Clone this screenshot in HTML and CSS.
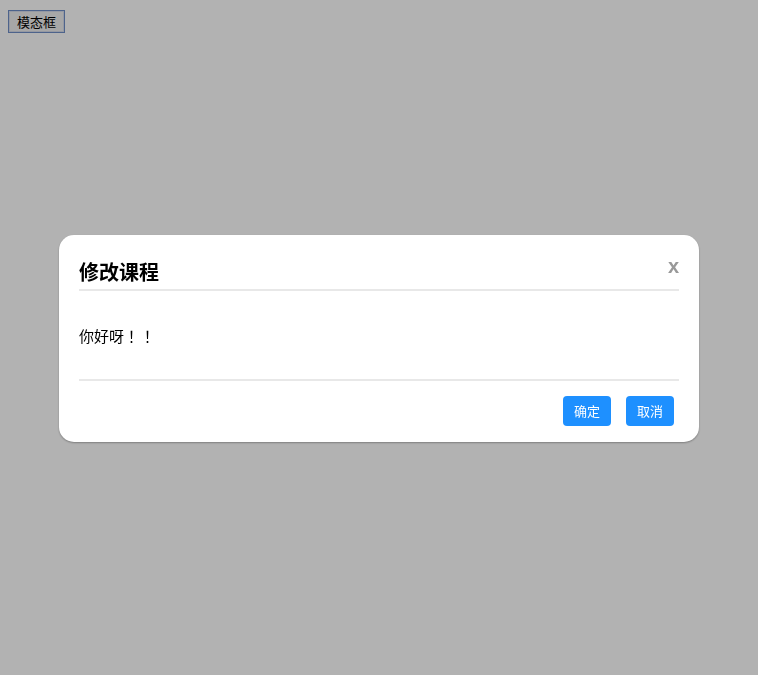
FILE: index.html
```html
<!DOCTYPE html>
<html lang="zh">
<head>
<meta charset="utf-8">
<link rel="stylesheet" href="styles.css">
</head>
<body>
<button class="open-btn">模态框</button>
<div class="overlay">
  <div class="modal">
    <div class="modal-header">
      <h3 class="modal-title">修改课程</h3>
      <span class="modal-close">x</span>
    </div>
    <div class="modal-body">你好呀<span class="bang" lang="zh-TW">！！</span></div>
    <div class="modal-footer">
      <button class="btn">确定</button>
      <button class="btn">取消</button>
    </div>
  </div>
</div>
</body>
</html>
```
FILE: styles.css
```css
body {
  margin: 8px;
  font-family: "Noto Sans CJK SC", sans-serif;
  background: #fff;
}
.open-btn {
  font-family: "Noto Sans CJK SC", sans-serif;
  font-size: 13px;
  line-height: 17px;
  width: 57px;
  height: 23px;
  padding: 0;
  border: 1px solid #6f8fc8;
  box-shadow: inset 0 0 0 1px #d6dcea;
  background: #efefef;
  color: #000;
}
.overlay {
  position: fixed;
  inset: 0;
  padding-top: 1px;
  background: rgba(0, 0, 0, 0.3);
  display: flex;
  align-items: center;
  justify-content: center;
}
.modal {
  width: 640px;
  box-sizing: border-box;
  background: #fff;
  border-radius: 15px;
  padding: 0 20px;
  box-shadow: 0 1px 2px rgba(0, 0, 0, 0.3);
}
.modal-header {
  padding-top: 20px;
  display: flex;
  justify-content: space-between;
  align-items: center;
  border-bottom: 2px solid #e8e8e8;
}
.modal-title {
  margin: 0;
  font-size: 20px;
  font-weight: bold;
  line-height: 34px;
  color: #000;
}
.modal-close {
  font-family: "Liberation Sans", Arial, sans-serif;
  font-weight: bold;
  font-size: 20px;
  color: #999;
  line-height: 20px;
  align-self: flex-start;
  margin-top: 1px;
}
.modal-body {
  padding: 32px 0 31px;
  font-size: 15px;
  line-height: 25px;
  color: #000;
  text-spacing-trim: space-all;
  border-bottom: 2px solid #e8e8e8;
}
.bang {
  font-family: "Noto Sans CJK TC", sans-serif;
  letter-spacing: 1px;
}
.modal-footer {
  display: flex;
  justify-content: flex-end;
  gap: 15px;
  padding: 15px 5px 16px 0;
}
.btn {
  width: 48px;
  height: 30px;
  border: none;
  border-radius: 4px;
  background: #1e90ff;
  color: #fff;
  font-family: "Noto Sans CJK SC", sans-serif;
  font-size: 13px;
  padding: 0;
}
```
